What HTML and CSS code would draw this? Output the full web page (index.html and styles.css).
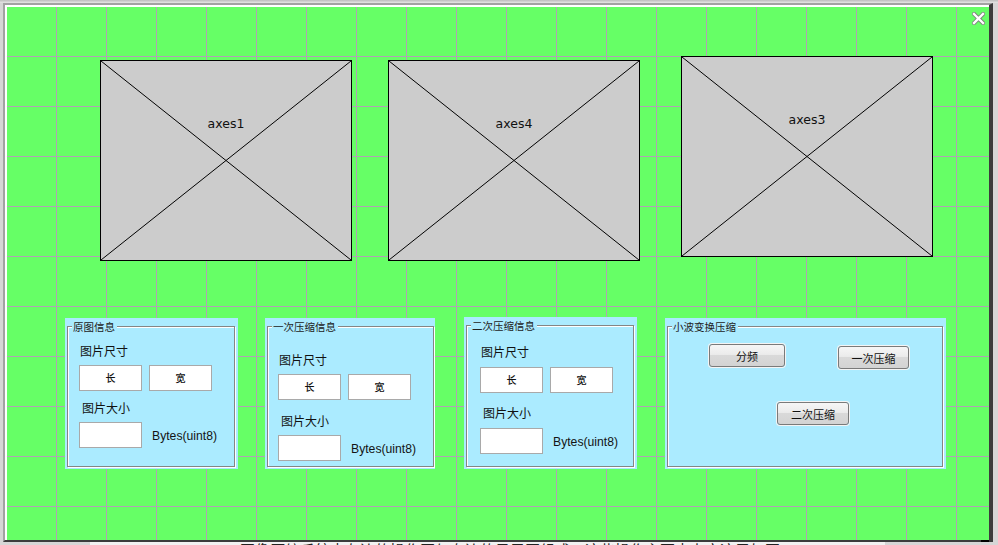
FILE: index.html
```html
<!DOCTYPE html>
<html lang="zh">
  <head>
    <meta charset="UTF-8" />
    <title>GUIDE - 图像压缩</title>
    <link rel="stylesheet" href="styles.css">
  </head>
  <body>
    <div class="toolbar-edge"></div>

    <div class="window">
      <div class="canvas">
        <!-- close mark in the corner of the figure -->
        <svg class="close-mark" width="13" height="13" viewBox="0 0 13 13">
          <path d="M2 2 L11 11 M11 2 L2 11" stroke="#7a7a7a" stroke-width="4" stroke-linecap="square" />
          <path d="M2 2 L11 11 M11 2 L2 11" stroke="#fff" stroke-width="2.4" stroke-linecap="square" />
        </svg>

        <!-- axes placeholders -->
        <div class="axes axes-1">
          <svg class="cross" viewBox="0 0 249 199" preserveAspectRatio="none">
            <line x1="0" y1="0" x2="249" y2="199" />
            <line x1="249" y1="0" x2="0" y2="199" />
          </svg>
          <span class="axes-name">axes1</span>
        </div>
        <div class="axes axes-4">
          <svg class="cross" viewBox="0 0 249 199" preserveAspectRatio="none">
            <line x1="0" y1="0" x2="249" y2="199" />
            <line x1="249" y1="0" x2="0" y2="199" />
          </svg>
          <span class="axes-name">axes4</span>
        </div>
        <div class="axes axes-3">
          <svg class="cross" viewBox="0 0 249 199" preserveAspectRatio="none">
            <line x1="0" y1="0" x2="249" y2="199" />
            <line x1="249" y1="0" x2="0" y2="199" />
          </svg>
          <span class="axes-name">axes3</span>
        </div>

        <!-- info panels -->
        <div class="panel panel-1">
          <div class="frame">
            <span class="panel-title">原图信息</span>
          </div>
          <div class="info info-1">
            <div class="field-label">图片尺寸</div>
            <div class="size-row">
              <div class="edit">长</div>
              <div class="edit">宽</div>
            </div>
            <div class="field-label second">图片大小</div>
            <div class="bytes-row">
              <div class="edit"></div>
              <span class="bytes">Bytes(uint8)</span>
            </div>
          </div>
        </div>

        <div class="panel panel-2">
          <div class="frame">
            <span class="panel-title">一次压缩信息</span>
          </div>
          <div class="info info-2">
            <div class="field-label">图片尺寸</div>
            <div class="size-row">
              <div class="edit">长</div>
              <div class="edit">宽</div>
            </div>
            <div class="field-label second">图片大小</div>
            <div class="bytes-row">
              <div class="edit"></div>
              <span class="bytes">Bytes(uint8)</span>
            </div>
          </div>
        </div>

        <div class="panel panel-3">
          <div class="frame">
            <span class="panel-title">二次压缩信息</span>
          </div>
          <div class="info info-3">
            <div class="field-label">图片尺寸</div>
            <div class="size-row">
              <div class="edit">长</div>
              <div class="edit">宽</div>
            </div>
            <div class="field-label second">图片大小</div>
            <div class="bytes-row">
              <div class="edit"></div>
              <span class="bytes">Bytes(uint8)</span>
            </div>
          </div>
        </div>

        <div class="panel panel-4">
          <div class="frame">
            <span class="panel-title">小波变换压缩</span>
          </div>
          <div class="wavelet">
            <div class="btn-row">
              <button class="push push-split">分频</button>
              <button class="push push-first">一次压缩</button>
            </div>
            <div class="btn-row">
              <button class="push push-second">二次压缩</button>
            </div>
          </div>
        </div>

        <span class="resize-grip"></span>
      </div>
    </div>

    <div class="doc-line">
      <span>图像压缩系统由左边的操作区与右边的显示区组成，这些操作主要由上方这里如图4-4</span>
    </div>
  </body>
</html>
```

FILE: styles.css
```css
* {
  margin: 0;
  padding: 0;
  box-sizing: border-box;
}

body {
  width: 998px;
  height: 545px;
  overflow: hidden;
  background-color: #d6d6d6;
  font-family: "Noto Sans CJK SC", "Liberation Sans", sans-serif;
  color: #111;
}

.toolbar-edge {
  height: 3px;
  background: linear-gradient(#bdbdbd, #e6e6e6);
}

/* figure window */
.window {
  margin-left: 3px;
  width: 990px;
  border-top: 2px solid #a2a2a2;
  border-left: 2px solid #a2a2a2;
  border-right: 4px solid #3c3c3c;
  border-bottom: 2px solid #3c3c3c;
  padding: 2px 0 0 2px;
  background-color: #fff;
}

.canvas {
  position: relative;
  width: 982px;
  height: 533px;
  background-color: #66ff66;
  background-image:
    linear-gradient(to right, transparent 49px, #b1a2b4 49px),
    linear-gradient(to bottom, transparent 49px, #b1a2b4 49px);
  background-size: 50px 50px;
}

.close-mark {
  position: absolute;
  left: 965px;
  top: 5px;
}

.resize-grip {
  position: absolute;
  right: 0;
  bottom: -2px;
  width: 8px;
  height: 2px;
  background-color: #000;
}

/* axes placeholders sit on the design canvas */
.axes {
  position: absolute;
  width: 252px;
  height: 201px;
  border: 1px solid #000;
  background-color: #cccccc;
  text-align: center;
  padding-top: 48px;
}

.axes-1 {
  left: 93px;
  top: 53px;
}

.axes-4 {
  left: 381px;
  top: 53px;
}

.axes-3 {
  left: 674px;
  top: 49px;
}

.cross {
  position: absolute;
  left: 0;
  top: 0;
  width: 100%;
  height: 100%;
}

.cross line {
  stroke: #000;
  stroke-width: 1;
  vector-effect: non-scaling-stroke;
}

.axes-name {
  position: relative;
  font-family: "DejaVu Sans", sans-serif;
  font-size: 12.5px;
  color: #111;
}

/* panels */
.panel {
  position: absolute;
  height: 151px;
  background-color: #abebff;
}

.panel-1 {
  left: 58px;
  top: 311px;
  width: 173px;
}

.panel-2 {
  left: 258px;
  top: 311px;
  width: 170px;
}

.panel-2 .frame {
  right: 1px;
}

.panel-3 {
  left: 457px;
  top: 310px;
  width: 173px;
  height: 152px;
}

.panel-4 {
  left: 658px;
  top: 311px;
  width: 281px;
}

.frame {
  position: absolute;
  left: 2px;
  top: 8px;
  right: 3px;
  bottom: 2px;
  border: 1px solid #858585;
  box-shadow: inset 1px 1px 0 #fff, 1px 1px 0 #fff;
}

.panel-title {
  position: absolute;
  left: 4px;
  top: -7px;
  padding: 0 2px 0 1px;
  background-color: #abebff;
  font-size: 10.5px;
  line-height: 14px;
  color: #222;
}

.info {
  position: relative;
  padding-left: 14px;
}

.info-1 {
  padding-top: 26px;
}

.info-2 {
  padding-top: 35px;
  padding-left: 13px;
}

.info-3 {
  padding-top: 28px;
  padding-left: 16px;
}

.field-label {
  font-size: 12px;
  line-height: 14px;
  margin-left: 1px;
  margin-bottom: 7px;
}

.field-label.second {
  margin-left: 3px;
  margin-top: 10px;
}

.info-2 .field-label.second {
  margin-top: 14px;
}

.info-3 .field-label {
  margin-bottom: 8px;
}

.info-3 .field-label.second {
  margin-top: 13px;
}

.size-row {
  display: flex;
  gap: 7px;
}

.bytes-row {
  display: flex;
  align-items: center;
  gap: 10px;
}

.edit {
  width: 63px;
  height: 26px;
  background-color: #fff;
  border: 1px solid #a9a9a9;
  font-size: 10px;
  font-weight: 500;
  line-height: 24px;
  text-align: center;
}

.bytes {
  font-family: "Liberation Sans", sans-serif;
  font-size: 12.2px;
  color: #141414;
  margin-top: 1px;
}

/* wavelet buttons */
.wavelet {
  position: relative;
  padding-top: 26px;
}

.btn-row {
  display: flex;
  align-items: flex-start;
}

.push {
  height: 23px;
  font-family: "Noto Sans CJK SC", sans-serif;
  font-size: 11px;
  color: #111;
  background: linear-gradient(#f6f6f6 0%, #ebebeb 45%, #d9d9d9 50%, #d3d3d3 100%);
  border: 1px solid #7a7a7a;
  border-radius: 3px;
  box-shadow: 0 0 0 1px #f4f4f4;
}

.push-split {
  width: 76px;
  margin-left: 44px;
}

.push-first {
  width: 71px;
  margin-left: 53px;
  margin-top: 2px;
}

.push-second {
  width: 72px;
  margin-left: 112px;
  margin-top: 33px;
}

/* text of the document behind the window */
.doc-line {
  height: 20px;
  margin-left: 90px;
  width: 795px;
  background-color: #f2f2f2;
  padding-left: 150px;
  font-size: 15px;
  line-height: 15px;
  color: #222;
  white-space: nowrap;
  overflow: hidden;
}
```
